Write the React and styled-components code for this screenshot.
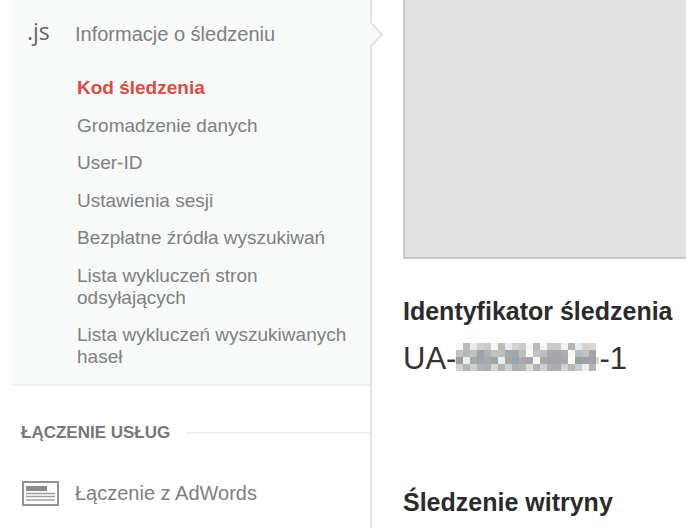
import React from "react";
import styled, { createGlobalStyle } from "styled-components";

const GlobalStyle = createGlobalStyle`
  * { box-sizing: border-box; }
  body {
    margin: 0;
    background: #fff;
    font-family: "Liberation Sans", Arial, sans-serif;
    overflow: hidden;
  }
`;

const Page = styled.div`
  display: flex;
  min-height: 100vh;
`;

const Sidebar = styled.nav`
  flex: 0 0 372px;
  padding-left: 11px;
  border-right: 2px solid #e2e2e2;
`;

const ActiveSection = styled.section`
  position: relative;
  padding: 20px 0 16px;
  background: #f8f9f9;
  border-bottom: 2px solid #f0f0f0;
`;

const Pointer = styled.svg`
  position: absolute;
  top: 22px;
  right: -14px;
  width: 15px;
  height: 25px;
`;

const NavLink = styled.a`
  display: flex;
  align-items: center;
  height: 28px;
  color: #808080;
  font-size: 20px;
  line-height: 28px;
  text-decoration: none;
`;

const IconSlot = styled.span`
  display: flex;
  flex: 0 0 64px;
  padding-left: 11px;
`;

const ScriptMark = styled.span`
  padding: 0 0 6px 5px;
  color: #666;
  font-family: "Open Sans", sans-serif;
  font-size: 23px;
  font-weight: 500;
  line-height: 22px;
`;

const SubList = styled.ul`
  display: flex;
  flex-direction: column;
  justify-content: space-between;
  min-height: 291px;
  margin: 29px 0 0;
  padding: 0 20px 0 66px;
  list-style: none;
`;

const SubLink = styled.a`
  display: block;
  color: ${(p) => (p.$active ? "#e04a3f" : "#808080")};
  font-size: 19px;
  font-weight: ${(p) => (p.$active ? 700 : 400)};
  line-height: 22px;
  text-decoration: none;
`;

const GroupTitle = styled.h2`
  display: flex;
  align-items: center;
  gap: 16px;
  margin: 35px 0 34px;
  padding-left: 10px;
  color: #777;
  font-size: 17px;
  line-height: 24px;

  &::after {
    content: "";
    flex: 1;
    height: 2px;
    background: #f2f2f2;
  }
`;

const Main = styled.main`
  flex: 1;
  min-width: 0;
  padding-left: 31px;
`;

const Preview = styled.div`
  height: 259px;
  background: #e2e2e2;
  border-left: 2px solid #c9c9c9;
  border-bottom: 2px solid #c9c9c9;
`;

const Heading = styled.h3`
  margin: 0;
  padding-top: ${(p) => p.$space};
  color: #2b2b2b;
  font-size: 25px;
  line-height: 30px;
  white-space: nowrap;
`;

const TrackingId = styled.p`
  display: flex;
  align-items: flex-start;
  margin: 15px 0 0;
  color: #333;
  font-size: 31px;
  line-height: 36px;
`;

const Mosaic = styled.svg`
  flex: none;
  width: 143px;
  height: 28px;
  margin-top: 2px;
`;

const mosaicRows = [
  "#fbf6f0 #bebbba #e4edf5 #d6d0ca #c6cdd2 #f8f4ee #bababb #e5edf3 #d7d2cc #c5cdd1 #f9f4ec #bababa #f0f7fa #d0c9c2 #c5cdd4 #f4f0ea #b6b6b6 #e3ecf0 #d8d3cb #d6d8dc #ffffff",
  "#c5c0bb #b7b7b7 #bec2c2 #a0a2a7 #b0b3b6 #c3c1be #bcc0c2 #a7a8a9 #a2a6ae #bcbebe #fbfaf4 #c2c2c2 #bbbdbe #a5a8ae #a5a7ac #acacae #fbfaf4 #b7bdc6 #c7c0b8 #a3a5aa #ffffff",
  "#a09e9b #e5efed #b0a79f #9ba5b1 #aaa9a9 #a1a4a8 #e5efed #aea69e #94a3b8 #b5a8a2 #9da5ad #fbfaf4 #b3a69c #a5a6aa #a7a5a5 #a5a9b0 #fbfaf4 #9e9f9c #9da1a5 #a0a2a5 #e4d4ca",
  "#d8d0c7 #b3b3b5 #c5d0d8 #b7b3b0 #adb0b5 #d7d2cd #b3b3b4 #c5d0d7 #b4b0ae #b2b3b5 #dfdad3 #b3b3b4 #cbd3da #b1adaa #a8abb1 #d5d0c9 #b7b7b7 #c4ced8 #efede8 #b6b6b8 #ffffff",
].map((row) => row.split(" "));

const items = [
  "Kod śledzenia",
  "Gromadzenie danych",
  "User-ID",
  "Ustawienia sesji",
  "Bezpłatne źródła wyszukiwań",
  "Lista wykluczeń stron odsyłających",
  "Lista wykluczeń wyszukiwanych haseł",
];

function AdIcon() {
  return (
    <svg width="37" height="25" viewBox="0 0 37 25" aria-hidden="true">
      <rect x="1" y="1" width="35" height="23" fill="#fff" stroke="#929292" strokeWidth="2" />
      <rect x="4" y="5" width="21" height="5" fill="#8c8c8c" />
      <path d="M4 12.5H33M4 15.5H33M4 19H33" stroke="#a0a0a0" strokeWidth="1.5" />
    </svg>
  );
}

export default function App() {
  return (
    <>
      <GlobalStyle />
      <Page>
        <Sidebar>
          <ActiveSection>
            <NavLink href="#info">
              <IconSlot>
                <ScriptMark>.js</ScriptMark>
              </IconSlot>
              Informacje o śledzeniu
            </NavLink>
            <Pointer viewBox="0 0 15 25" aria-hidden="true">
              <path d="M0 0L2 1L13 12.5L2 24L0 25Z" fill="#f8f9f9" />
              <path d="M2 1L13 12.5L2 24" fill="none" stroke="#e2e2e2" strokeWidth="2" />
            </Pointer>
            <SubList>
              {items.map((label, i) => (
                <li key={label}>
                  <SubLink href={`#item-${i}`} $active={i === 0}>
                    {label}
                  </SubLink>
                </li>
              ))}
            </SubList>
          </ActiveSection>
          <GroupTitle>ŁĄCZENIE USŁUG</GroupTitle>
          <NavLink href="#adwords">
            <IconSlot>
              <AdIcon />
            </IconSlot>
            Łączenie z AdWords
          </NavLink>
        </Sidebar>
        <Main>
          <Preview />
          <Heading $space="37px">Identyfikator śledzenia</Heading>
          <TrackingId>
            UA-
            <Mosaic viewBox="0 0 143 28" role="img" aria-label="ukryty numer">
              {mosaicRows.map((row, y) =>
                row.map((fill, x) => (
                  <rect key={`${x}-${y}`} x={x * 7} y={y * 7} width="7" height="7" fill={fill} shapeRendering="crispEdges" />
                ))
              )}
            </Mosaic>
            -1
          </TrackingId>
          <Heading $space="110px">Śledzenie witryny</Heading>
        </Main>
      </Page>
    </>
  );
}
